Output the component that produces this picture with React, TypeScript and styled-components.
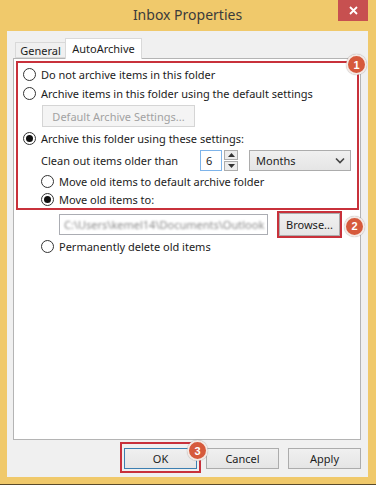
import React from "react";
import styled, { createGlobalStyle } from "styled-components";

const Global = createGlobalStyle`
  html, body {
    margin: 0;
    padding: 0;
    background: #fff;
  }
  * { box-sizing: border-box; }
`;

const Window = styled.div`
  width: 376px;
  height: 485px;
  background: #f0c96b;
  border-bottom: 1px solid #5a4a2a;
  display: flex;
  flex-direction: column;
  padding: 0 8px 7px 7px;
  font-family: "Noto Sans", "Open Sans", sans-serif;
  font-size: 11px;
  color: #1c1c1c;
`;

const TitleBar = styled.div`
  height: 31px;
  display: grid;
  grid-template-columns: 1fr auto 1fr;
  align-items: start;
`;

const Title = styled.div`
  grid-column: 2;
  font-size: 14px;
  color: #3b3b3b;
  padding-top: 5px;
`;

const CloseBtn = styled.div`
  grid-column: 3;
  justify-self: end;
  width: 30px;
  height: 21px;
  background: #c75050;
  display: flex;
  align-items: center;
  justify-content: center;
`;

const Body = styled.div`
  flex: 1;
  background: #f0f0f0;
  display: flex;
  flex-direction: column;
  padding: 7px 7px 0 6px;
`;

const Tabs = styled.div`
  display: flex;
  align-items: flex-end;
  height: 20px;
  padding-left: 2px;
  position: relative;
  z-index: 1;
`;

const Tab = styled.div<{ active?: boolean; w: number }>`
  width: ${(p) => p.w}px;
  height: ${(p) => (p.active ? "21px" : "16px")};
  margin-bottom: ${(p) => (p.active ? "-1px" : "0")};
  padding-top: ${(p) => (p.active ? "2px" : "0")};
  text-align: center;
  background: ${(p) => (p.active ? "#fff" : "#f0f0f0")};
  border: 1px solid #d9d9d9;
  border-bottom: ${(p) => (p.active ? "none" : "1px solid #d9d9d9")};
  border-right: ${(p) => (p.active ? "1px solid #d9d9d9" : "none")};
  line-height: 15px;
`;

const Panel = styled.div`
  height: 382px;
  background: #fff;
  border: 1px solid #b4b4b4;
  padding: 2px 1px 0 2px;
  display: flex;
  flex-direction: column;
`;

const Group = styled.div`
  position: relative;
  border: 2px solid #c8313b;
  padding: 2px 0 0 5px;
  display: flex;
  flex-direction: column;
`;

const Badge = styled.div<{ top: number; left: number }>`
  position: absolute;
  top: ${(p) => p.top}px;
  left: ${(p) => p.left}px;
  width: 21px;
  height: 21px;
  border-radius: 50%;
  background: #d65a3c;
  border: 2px solid #f4e9e4;
  box-shadow: 0 0 1px rgba(0, 0, 0, 0.4);
  color: #fff;
  font-family: "Liberation Sans", Arial, sans-serif;
  font-weight: bold;
  font-size: 11px;
  display: flex;
  align-items: center;
  justify-content: center;
  z-index: 3;
`;

const Row = styled.div<{ indent?: number; h?: number; mt?: number }>`
  display: flex;
  align-items: center;
  gap: 5px;
  height: ${(p) => p.h ?? 19}px;
  margin-top: ${(p) => p.mt ?? 0}px;
  padding-left: ${(p) => p.indent ?? 0}px;
  white-space: nowrap;
`;

const RadioCircle = styled.span<{ checked?: boolean }>`
  width: 13px;
  height: 13px;
  border-radius: 50%;
  border: 1px solid #333;
  background: #fff;
  display: inline-flex;
  align-items: center;
  justify-content: center;
  flex: none;
  &::after {
    content: "";
    width: 7px;
    height: 7px;
    border-radius: 50%;
    background: ${(p) => (p.checked ? "#111" : "transparent")};
  }
`;

const Btn = styled.div<{ disabled?: boolean; primary?: boolean; w: number; h?: number; mt?: number }>`
  width: ${(p) => p.w}px;
  height: ${(p) => p.h ?? 22}px;
  margin-top: ${(p) => p.mt ?? 0}px;
  display: flex;
  align-items: center;
  justify-content: center;
  background: ${(p) => (p.disabled ? "#f4f4f4" : "linear-gradient(#f0f0f0, #e5e5e5)")};
  border: 1px solid ${(p) => (p.disabled ? "#d5d5d5" : p.primary ? "#3c7fb1" : "#acacac")};
  color: ${(p) => (p.disabled ? "#a2a2a2" : "#1c1c1c")};
  flex: none;
`;

const Label = styled.span`
  width: 159px;
  flex: none;
`;

const NumBox = styled.div`
  width: 22px;
  height: 21px;
  border: 1px solid #7eb4ea;
  padding-left: 5px;
  display: flex;
  align-items: center;
`;

const Spin = styled.div`
  display: flex;
  flex-direction: column;
  gap: 1px;
  margin-left: 2px;
`;

const SpinBtn = styled.div`
  width: 14px;
  height: 10px;
  border: 1px solid #acacac;
  background: #ececec;
  display: flex;
  align-items: center;
  justify-content: center;
`;

const Select = styled.div`
  width: 102px;
  height: 21px;
  margin-left: 11px;
  border: 1px solid #acacac;
  background: linear-gradient(#f0f0f0, #e5e5e5);
  display: flex;
  align-items: center;
  justify-content: space-between;
  padding: 0 5px 0 6px;
`;

const PathRow = styled.div`
  display: flex;
  align-items: center;
  height: 28px;
  padding-left: 43px;
`;

const PathBox = styled.div`
  width: 209px;
  height: 21px;
  border: 1px solid #abadb3;
  background: #fff;
  display: flex;
  align-items: center;
  padding-left: 4px;
  overflow: hidden;
  white-space: nowrap;
  color: #8a8a8a;
  span {
    filter: blur(1.1px);
  }
`;

const Highlight = styled.div<{ pad?: string; ml?: number; mr?: number }>`
  position: relative;
  border: 2px solid #c8313b;
  padding: ${(p) => p.pad ?? "0"};
  margin-left: ${(p) => p.ml ?? 0}px;
  margin-right: ${(p) => p.mr ?? 0}px;
`;

const Footer = styled.div`
  flex: 1;
  display: flex;
  justify-content: flex-end;
  align-items: flex-start;
  gap: 9px;
  padding-top: 2px;
`;

const Chevron = () => (
  <svg width="10" height="7" viewBox="0 0 10 7">
    <path d="M1 1.5 L5 5.5 L9 1.5" stroke="#444" strokeWidth="1.6" fill="none" />
  </svg>
);

const Tri = ({ up }: { up?: boolean }) => (
  <svg width="7" height="4" viewBox="0 0 7 4">
    <path d={up ? "M0 4 L3.5 0 L7 4 Z" : "M0 0 L3.5 4 L7 0 Z"} fill="#333" />
  </svg>
);

export default function App() {
  return (
    <>
      <Global />
      <Window>
        <TitleBar>
          <Title>Inbox Properties</Title>
          <CloseBtn>
            <svg width="9" height="9" viewBox="0 0 9 9">
              <path d="M1 1 L8 8 M8 1 L1 8" stroke="#fff" strokeWidth="1.8" />
            </svg>
          </CloseBtn>
        </TitleBar>
        <Body>
          <Tabs>
            <Tab w={50}>General</Tab>
            <Tab active w={77}>AutoArchive</Tab>
          </Tabs>
          <Panel>
            <Group>
              <Badge top={-9} left={328}>1</Badge>
              <Row>
                <RadioCircle />
                <span>Do not archive items in this folder</span>
              </Row>
              <Row>
                <RadioCircle />
                <span>Archive items in this folder using the default settings</span>
              </Row>
              <Row h={22} mt={2} indent={19}>
                <Btn disabled w={153}>Default Archive Settings...</Btn>
              </Row>
              <Row mt={2}>
                <RadioCircle checked />
                <span>Archive this folder using these settings:</span>
              </Row>
              <Row h={21} mt={2} indent={18} style={{ gap: 0 }}>
                <Label>Clean out items older than</Label>
                <NumBox>6</NumBox>
                <Spin>
                  <SpinBtn><Tri up /></SpinBtn>
                  <SpinBtn><Tri /></SpinBtn>
                </Spin>
                <Select>
                  <span>Months</span>
                  <Chevron />
                </Select>
              </Row>
              <Row mt={1} indent={18}>
                <RadioCircle />
                <span>Move old items to default archive folder</span>
              </Row>
              <Row indent={18} h={17}>
                <RadioCircle checked />
                <span>Move old items to:</span>
              </Row>
            </Group>
            <PathRow>
              <PathBox>
                <span>C:\Users\kemel14\Documents\Outlook</span>
              </PathBox>
              <Highlight ml={9}>
                <Btn w={61} h={23}>Browse...</Btn>
                <Badge top={3} left={65}>2</Badge>
              </Highlight>
            </PathRow>
            <Row indent={25} h={17}>
              <RadioCircle />
              <span>Permanently delete old items</span>
            </Row>
          </Panel>
          <Footer>
            <Highlight pad="4px 2px 2px 2px" mr={-4}>
              <Btn primary w={73} h={21}>OK</Btn>
              <Badge top={-4} left={65}>3</Badge>
            </Highlight>
            <Btn w={73} h={21} mt={6}>Cancel</Btn>
            <Btn w={73} h={21} mt={6}>Apply</Btn>
          </Footer>
        </Body>
      </Window>
    </>
  );
}
